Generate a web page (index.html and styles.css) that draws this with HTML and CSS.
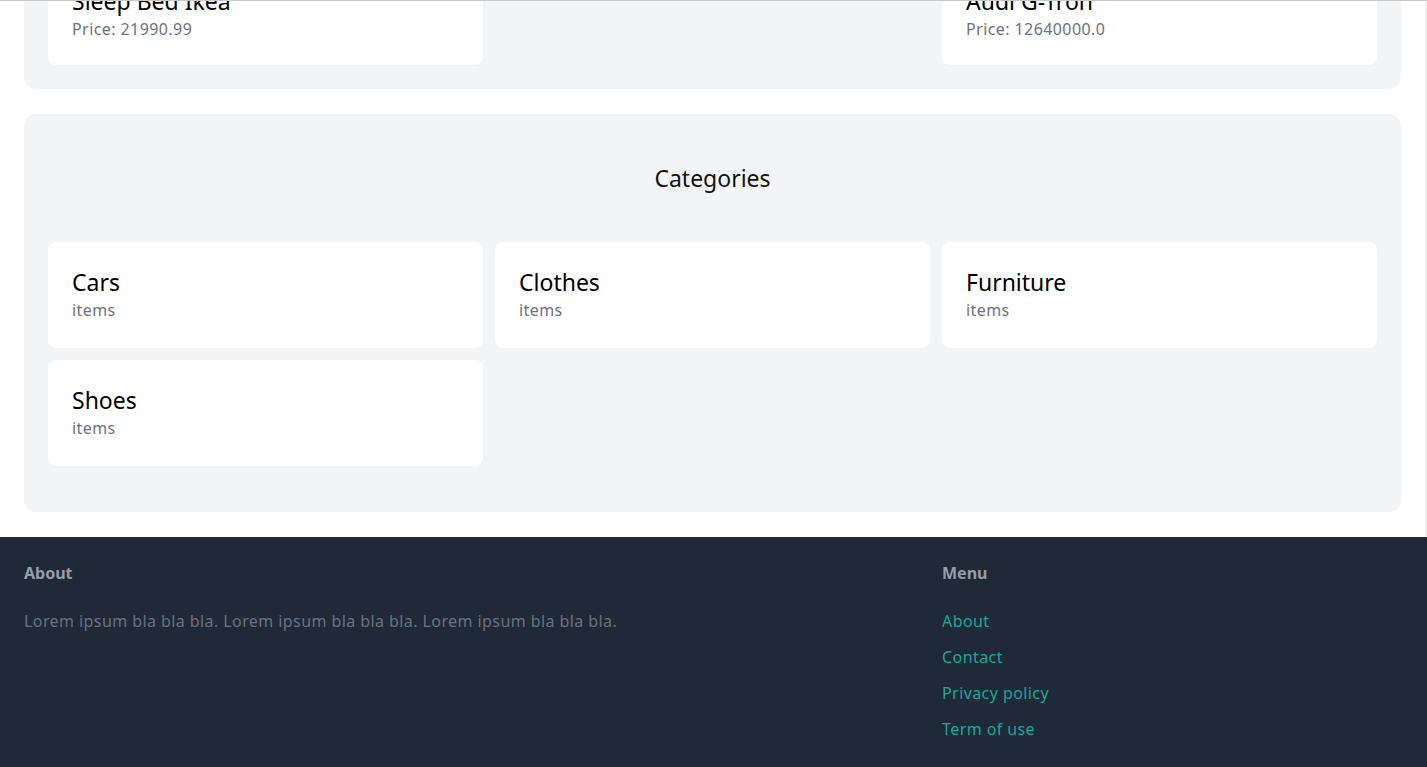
FILE: index.html
```html
<!DOCTYPE html>
<html lang="en">
<head>
<meta charset="utf-8">
<title>Shop</title>
<link rel="stylesheet" href="styles.css">
</head>
<body>
<div class="frame-line"></div>
<main class="main">
  <section class="panel panel-products">
    <div class="grid">
      <div class="card">
        <h3 class="card-title">Sleep Bed Ikea</h3>
        <p class="card-sub">Price: 21990.99</p>
      </div>
      <div class="card-empty"></div>
      <div class="card">
        <h3 class="card-title">Audi G-Tron</h3>
        <p class="card-sub">Price: 12640000.0</p>
      </div>
    </div>
  </section>
  <section class="panel panel-categories">
    <h2 class="panel-title">Categories</h2>
    <div class="grid">
      <div class="card card-cat">
        <h3 class="card-title">Cars</h3>
        <p class="card-sub">items</p>
      </div>
      <div class="card card-cat">
        <h3 class="card-title">Clothes</h3>
        <p class="card-sub">items</p>
      </div>
      <div class="card card-cat">
        <h3 class="card-title">Furniture</h3>
        <p class="card-sub">items</p>
      </div>
      <div class="card card-cat">
        <h3 class="card-title">Shoes</h3>
        <p class="card-sub">items</p>
      </div>
    </div>
  </section>
</main>
<footer class="footer">
  <div class="footer-grid">
    <div class="footer-about">
      <h4 class="footer-heading">About</h4>
      <p class="footer-text">Lorem ipsum bla bla bla. Lorem ipsum bla bla bla. Lorem ipsum bla bla bla.</p>
    </div>
    <div class="footer-menu">
      <h4 class="footer-heading">Menu</h4>
      <ul class="footer-links">
        <li><a href="#">About</a></li>
        <li><a href="#">Contact</a></li>
        <li><a href="#">Privacy policy</a></li>
        <li><a href="#">Term of use</a></li>
      </ul>
    </div>
  </div>
</footer>
</body>
</html>
```
FILE: styles.css
```css
* { box-sizing: border-box; }
html, body { margin: 0; padding: 0; }
body {
  font-family: "Noto Sans", "DejaVu Sans", sans-serif;
  font-size: 16px;
  line-height: 24px;
  letter-spacing: 0.42px;
  color: #111;
  background: #fff;
}
.frame-line {
  position: fixed;
  top: 0; left: 0; right: 0;
  height: 1px;
  background: #c9c9c9;
  z-index: 10;
}
.main {
  margin-top: -63px;
  padding: 0 24px 25px;
  border-right: 2px solid #efefef;
  display: flex;
  flex-direction: column;
  gap: 25px;
}
.panel {
  background: #f3f4f6;
  border-radius: 12px;
  padding: 24px;
}
.panel-categories { padding-bottom: 46px; }
.panel-title {
  margin: 0 0 24px;
  padding: 24px 0;
  text-align: center;
  font-size: 23px;
  line-height: 32px;
  font-weight: 400;
  letter-spacing: 0;
}
.grid {
  display: grid;
  grid-template-columns: repeat(3, 1fr);
  gap: 12px;
}
.card {
  background: #fff;
  border-radius: 8px;
  padding: 24px;
}
.card-cat { padding-bottom: 26px; }
.card-title {
  margin: 0;
  font-size: 23px;
  line-height: 32px;
  font-weight: 400;
  letter-spacing: 0;
  color: #000;
}
.card-sub {
  margin: 0;
  color: #6b7280;
}
.footer {
  background: #1f2937;
  padding: 24px 26px 40px 24px;
}
.footer-grid {
  display: grid;
  grid-template-columns: 2fr 1fr;
}
.footer-heading {
  margin: 0 0 24px;
  font-size: 16px;
  font-weight: 700;
  letter-spacing: 0;
  color: #959dab;
}
.footer-text {
  margin: 0;
  color: #6b7280;
}
.footer-links {
  list-style: none;
  margin: 0;
  padding: 0;
  display: flex;
  flex-direction: column;
  gap: 12px;
}
.footer-links a {
  color: #1aa898;
  text-decoration: none;
}
```
